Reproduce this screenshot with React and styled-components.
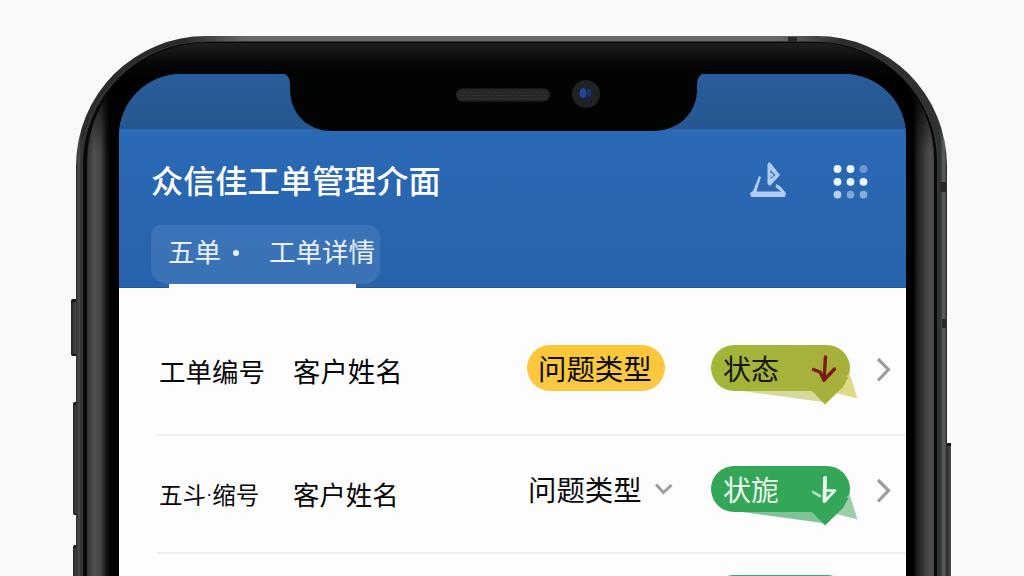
import React from "react";
import styled, { createGlobalStyle } from "styled-components";

const GlobalStyle = createGlobalStyle`
  * { box-sizing: border-box; }
  body { margin: 0; background: #f8f9fb; overflow: hidden; }
`;

const Stage = styled.main`
  position: relative;
  height: 576px;
  overflow: hidden;
  padding: 36px 0 0 76px;
  background: #f8f9fb;
  font-family: "Noto Sans CJK SC", "Noto Sans", sans-serif;
`;

const Phone = styled.div`
  position: relative;
  width: 871px;
  height: 900px;
  padding: 5px 8px 0 4px;
  border-radius: 130px 130px 0 0;
  background:
    linear-gradient(to right, #2c2d2e 0, #6a686b 60px, #6a686b 590px, #2a2b2b 660px) 110px 0 / 660px 6px no-repeat,
    linear-gradient(to right, #2c2d2e 0, #4a4b4c 3px, #2b2c2c 6px, #222 50%, #303232 864px, #606464 868px, #2a2c2c 871px);
`;

const Rim = styled.div`
  height: 100%;
  padding: 1px 2px 0 3px;
  border-radius: 125px 122px 0 0;
  background: #343536;
`;

const Groove = styled.div`
  height: 100%;
  padding: 1px 3px 0 4px;
  border-radius: 122px 120px 0 0;
  background: #080808;
`;

const Bezel = styled.div`
  height: 100%;
  padding: 31px 32px 0 32px;
  border-radius: 119px 116px 0 0;
  background:
    linear-gradient(to bottom, #1f1f1f 0, #050505 22px, rgba(0, 0, 0, 0.75) 42px, transparent 110px),
    linear-gradient(to right, #303132 0, #4f5052 7px, #434446 14px, #151515 19px, #000 23px, #000 826px, #1c1c1c 830px, #343434 836px, #4f4f50 843px, #404040 851px);
`;

const SideKey = styled.i`
  position: absolute;
  left: ${(p) => p.$x}px;
  top: ${(p) => p.$y}px;
  width: ${(p) => p.$w}px;
  height: ${(p) => p.$h}px;
  border-radius: 2px 0 0 2px;
  background: linear-gradient(to right, #222, #505050);
  border-top: 3px solid #151515;
  border-bottom: 2px solid #151515;
`;

const Antenna = styled.i`
  position: absolute;
  left: ${(p) => p.$x}px;
  top: ${(p) => p.$y}px;
  width: ${(p) => p.$w}px;
  height: ${(p) => p.$h}px;
  background: #292929;
`;

const Screen = styled.div`
  width: 787px;
  height: 100%;
  overflow: hidden;
  border-radius: 62px 62px 0 0;
  background: linear-gradient(#26568f 0, #26568f 150px, #fdfdfd 150px);
`;

const StatusBar = styled.div`
  height: 55px;
  background: linear-gradient(#285d9d, #26568f);
`;

const Notch = styled.svg`
  position: absolute;
  left: 204px;
  top: 37px;
  display: block;
`;

const Header = styled.header`
  height: 159px;
  padding: 27px 37px 0 32px;
  background: linear-gradient(#2a69b4, #2864ae);
  border-bottom: 1px solid #1e5498;
`;

const TitleRow = styled.div`
  display: flex;
  align-items: center;
  height: 50px;
`;

const Title = styled.h1`
  flex: 1;
  margin: -5px 0 0 0;
  color: #fff;
  font-size: 32.2px;
  font-weight: 500;
  line-height: 50px;
  white-space: nowrap;
`;

const HeaderIcon = styled.svg`
  display: block;
  margin-left: ${(p) => p.$gap || 0}px;
`;

const Tabs = styled.nav`
  position: relative;
  display: flex;
  align-items: center;
  width: 229px;
  height: 59px;
  margin-top: 19px;
  padding: 0 0 7px 17px;
  border-radius: 10px 12px 16px 16px;
  background: rgba(255, 255, 255, 0.09);
  color: #e8f1fc;
  font-size: 26.5px;
  line-height: 40px;
  white-space: nowrap;

  &::after {
    content: "";
    position: absolute;
    left: 18px;
    top: 59px;
    width: 187px;
    height: 4px;
    background: #fdfdfd;
  }
`;

const TabDot = styled.span`
  width: 6px;
  height: 6px;
  margin: 3px 30px 0 12px;
  border-radius: 50%;
  background: #e8f1fc;
`;

const List = styled.div`
  height: 500px;
  background: #fdfdfd;
`;

const Row = styled.section`
  display: grid;
  grid-template-columns: 134px 234px 184px 139px 1fr;
  align-items: start;
  height: ${(p) => p.$h}px;
  margin-left: 38px;
  padding-top: ${(p) => p.$top}px;
  border-bottom: 2px solid #efefef;
`;

const Cell = styled.span`
  display: flex;
  margin: ${(p) => p.$top}px 0 0 ${(p) => p.$left ?? 2}px;
  color: #080808;
  font-size: ${(p) => p.$size}px;
  line-height: 40px;
  white-space: nowrap;
`;

const NarrowDot = styled.span`
  font-family: "Liberation Sans", sans-serif;
  font-size: 18px;
  line-height: 40px;
`;

const TypeTag = styled.span`
  display: flex;
  align-items: center;
  gap: 12px;
  width: ${(p) => (p.$filled ? "138px" : "150px")};
  height: 46px;
  margin-left: 2px;
  padding-left: ${(p) => (p.$filled ? 11 : 1)}px;
  border-radius: 23px;
  background: ${(p) => (p.$filled ? "linear-gradient(#fbc638, #fac845)" : "none")};
  color: #0c0c0c;
  font-size: 28.4px;
  line-height: 44px;
  white-space: nowrap;
`;

const Status = styled.span`
  position: relative;
  display: flex;
  width: 139px;
  height: 46px;
  margin-left: 2px;
  padding-left: 12px;
  border-radius: 23px;
  background: ${(p) => p.$bg};
  color: ${(p) => p.$ink};
  font-size: 28px;
  line-height: 47px;
  white-space: nowrap;
`;

const Tail = styled.svg`
  position: absolute;
  left: 0;
  top: 0;
  overflow: visible;
`;

const Next = styled.svg`
  display: block;
  margin: 11px 0 0 26px;
`;

const TONES = {
  olive: { bg: "linear-gradient(to right, #a2b638, #a8b03c 80%)", tail: "#a8b03c", light: "#dcdb83", pale: "#d7d99c", ink: "#15170c" },
  green: { bg: "#34a657", tail: "#34a657", light: "#9bcfa7", pale: "#7fc397", ink: "#eefcf1" },
  mint: { bg: "#2faa70", tail: "#2faa70", light: "#9bcfa7", pale: "#7fc397", ink: "#fff" },
};

function StatusBadge({ tone, label }) {
  const t = TONES[tone];
  return (
    <Status $bg={t.bg} $ink={t.ink}>
      <Tail width="148" height="60" viewBox="0 0 148 60">
        <path d="M31 46 L112 57 L104 46 Z" fill={t.pale} />
        <path d="M138.500 28 L146.500 53.500 L122 47 Z" fill={t.light} />
        <path d="M96 44 L102 47 L114 59.500 L132 42 L137.500 32 L120 28 Z" fill={t.tail} />
        {tone === "olive" && (
          <g fill="none" stroke="#7a1c12" strokeLinecap="round" strokeLinejoin="round">
            <path d="M114.500 12 L113 35" strokeWidth="3.400" />
            <path d="M102.500 24.500 L109 27 L113 35 L123.500 24" strokeWidth="3.400" />
          </g>
        )}
        {tone === "green" && (
          <g fill="none" stroke="#eafff0" strokeLinecap="round" strokeLinejoin="round">
            <path d="M114 12 L113.500 35" strokeWidth="3.800" />
            <path d="M114 35 L124 24.500 L114 24.500" strokeWidth="2.600" />
            <path d="M102 26 L109 30" strokeWidth="2.600" opacity=".65" />
          </g>
        )}
      </Tail>
      {label}
    </Status>
  );
}

function Chevron() {
  return (
    <Next width="18" height="28" viewBox="0 0 18 28">
      <path d="M4 3 L14.500 13.500 L4 24.500" fill="none" stroke="#9d9d9d" strokeWidth="3.200" />
    </Next>
  );
}

const DOTS = [1, 1, 0.35, 1, 1, 1, 0.75, 0.45, 0.5];

export default function App() {
  return (
    <Stage>
      <GlobalStyle />
      <SideKey $x={71} $y={299} $w={6} $h={57} />
      <SideKey $x={73} $y={402} $w={4} $h={113} />
      <SideKey $x={73} $y={545} $w={4} $h={60} />
      <SideKey $x={946} $y={443} $w={5} $h={160} />
      <Phone>
        <Rim>
          <Groove>
            <Bezel>
              <Screen>
                <StatusBar />
                <Header>
                  <TitleRow>
                    <Title>众信佳工单管理介面</Title>
                    <HeaderIcon width="38" height="38" viewBox="0 0 38 38">
                      <g fill="#b0ccef">
                        <path d="M18.500 2.500 L20 0 L22 1.500 L31 13 L21 24 L18.500 22 Z M21.500 8 V17 L26.500 13 Z" fillRule="evenodd" />
                        <circle cx="22.500" cy="13" r="2" />
                        <path d="M10 14 L12 15 L7.500 29.500 H32 L26.500 25 L27 22 L31 24 L37 31 L36 35 H2 L1 31 L4 29 Z" />
                      </g>
                    </HeaderIcon>
                    <HeaderIcon $gap={46} width="36" height="36" viewBox="0 0 36 36">
                      {DOTS.map((o, i) => (
                        <circle key={i} cx={4.5 + (i % 3) * 13} cy={6 + Math.floor(i / 3) * 12.8} r="3.900" fill="#eaf7ff" opacity={o} />
                      ))}
                    </HeaderIcon>
                  </TitleRow>
                  <Tabs>
                    <span>五单</span>
                    <TabDot />
                    <span>工单详情</span>
                  </Tabs>
                </Header>
                <List>
                  <Row $h={148} $top={57}>
                    <Cell $size={26.5} $top={6} $left={2}>工单编号</Cell>
                    <Cell $size={27.4} $top={5}>客户姓名</Cell>
                    <TypeTag $filled>问题类型</TypeTag>
                    <StatusBadge tone="olive" label="状态" />
                    <Chevron />
                  </Row>
                  <Row $h={118} $top={30}>
                    <Cell $size={23.6} $top={8} $left={2}>
                      <span>五斗</span>
                      <NarrowDot>·</NarrowDot>
                      <span>缩号</span>
                    </Cell>
                    <Cell $size={26.4} $top={8}>客户姓名</Cell>
                    <TypeTag>
                      问题类型
                      <svg width="20" height="14" viewBox="0 0 20 14">
                        <path d="M2 2.500 L9.500 10.500 L17.500 3" fill="none" stroke="#9c9c9c" strokeWidth="3" />
                      </svg>
                    </TypeTag>
                    <StatusBadge tone="green" label="状旎" />
                    <Chevron />
                  </Row>
                  <Row $h={118} $top={21}>
                    <span />
                    <span />
                    <span />
                    <StatusBadge tone="mint" label="" />
                  </Row>
                </List>
              </Screen>
            </Bezel>
          </Groove>
        </Rim>
        <Antenna $x={712} $y={1} $w={9} $h={5} />
        <Antenna $x={864} $y={146} $w={6} $h={10} />
        <Antenna $x={866} $y={283} $w={4} $h={9} />
        <Notch width="430" height="60" viewBox="0 0 430 60">
          <path d="M0 0 Q10 0 10 12 V16 C10 40 27 58 52 58 H372 C399 58 417 40 417 16 V12 Q417 0 427 0 Z" fill="#020303" />
          <rect x="176" y="15.500" width="94" height="13" rx="6.500" fill="#262626" />
          <path d="M181 19.500 H266 M180 22.500 H267 M181 25.500 H266" stroke="#373737" strokeWidth="1" strokeDasharray="1.500 1.500" />
          <circle cx="306" cy="21" r="14" fill="#202123" />
          <circle cx="305.500" cy="21" r="7.500" fill="#15233f" />
          <ellipse cx="303" cy="20" rx="3.500" ry="5" fill="#24468b" />
          <ellipse cx="309" cy="20" rx="2" ry="4" fill="#1e3768" />
        </Notch>
      </Phone>
    </Stage>
  );
}
